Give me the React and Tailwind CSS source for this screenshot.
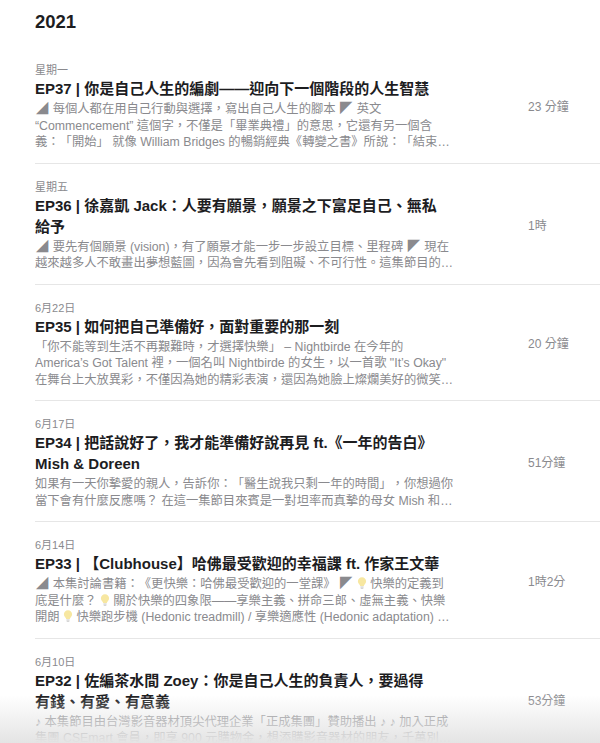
import React from 'react';

const Bulb = () => (
  <svg width="10" height="14" viewBox="0 0 11 14" className="inline-block align-[-2px]">
    <path d="M5.5 0.8C2.9 0.8 1 2.7 1 5.1c0 1.6 0.8 2.6 1.6 3.5 0.5 0.6 0.8 1.1 0.8 1.7h4.2c0-0.6 0.3-1.1 0.8-1.7C9.2 7.7 10 6.7 10 5.1 10 2.7 8.1 0.8 5.5 0.8z" fill="#f7e7a1" />
    <rect x="3.5" y="10.8" width="4" height="1.2" rx="0.5" fill="#c9c9c9" />
    <rect x="3.9" y="12.3" width="3.2" height="1.1" rx="0.5" fill="#c9c9c9" />
  </svg>
);

// 三角括號符號，左右各留一點空間
const Tri = ({ c }) => <span className="mx-[1px]">{c}</span>;

const episodes = [
  {
    date: '星期一',
    title: 'EP37 | 你是自己人生的編劇——迎向下一個階段的人生智慧',
    desc: (
      <>
        <Tri c="◢" /> 每個人都在用自己行動與選擇，寫出自己人生的腳本 <Tri c="◤" /> 英文 “Commencement” 這個字，不僅是「畢業典禮」的意思，它還有另一個含義：「開始」 就像 William Bridges 的暢銷經典《轉變之書》所說：「結束即是開始，每一個轉變都從結束開始」
      </>
    ),
    clamp: 'line-clamp-3',
    duration: '23 分鐘',
  },
  {
    date: '星期五',
    title: 'EP36 | 徐嘉凱 Jack：人要有願景，願景之下富足自己、無私給予',
    desc: (
      <>
        <Tri c="◢" /> 要先有個願景 (vision)，有了願景才能一步一步設立目標、里程碑 <Tri c="◤" /> 現在越來越多人不敢畫出夢想藍圖，因為會先看到阻礙、不可行性。這集節目的來賓徐嘉凱 Jack 要告訴大家
      </>
    ),
    clamp: 'line-clamp-2',
    duration: '1時',
  },
  {
    date: '6月22日',
    title: 'EP35 | 如何把自己準備好，面對重要的那一刻',
    desc: '「你不能等到生活不再艱難時，才選擇快樂」 – Nightbirde 在今年的 America’s Got Talent 裡，一個名叫 Nightbirde 的女生，以一首歌 "It’s Okay" 在舞台上大放異彩，不僅因為她的精彩表演，還因為她臉上燦爛美好的微笑與堅強',
    clamp: 'line-clamp-3',
    duration: '20 分鐘',
  },
  {
    date: '6月17日',
    title: 'EP34 | 把話說好了，我才能準備好說再見 ft.《一年的告白》Mish & Doreen',
    desc: '如果有一天你摯愛的親人，告訴你：「醫生說我只剩一年的時間」，你想過你當下會有什麼反應嗎？ 在這一集節目來賓是一對坦率而真摯的母女 Mish 和 Doreen，她們一起寫下',
    clamp: 'line-clamp-2',
    duration: '51分鐘',
  },
  {
    date: '6月14日',
    title: 'EP33 | 【Clubhouse】哈佛最受歡迎的幸福課 ft. 作家王文華',
    desc: (
      <>
        <Tri c="◢" /> 本集討論書籍：《更快樂：哈佛最受歡迎的一堂課》 <Tri c="◤" /> <Bulb /> 快樂的定義到底是什麼？ <Bulb /> 關於快樂的四象限——享樂主義、拼命三郎、虛無主義、快樂開朗 <Bulb /> 快樂跑步機 (Hedonic treadmill) / 享樂適應性 (Hedonic adaptation) 與如何跳脫
      </>
    ),
    clamp: 'line-clamp-3',
    duration: '1時2分',
  },
  {
    date: '6月10日',
    title: (
      <>
        EP32 | 佐編茶水間 Zoey：你是自己人生的負責人，要過得
        <br />
        有錢、有愛、有意義
      </>
    ),
    desc: '♪ 本集節目由台灣影音器材頂尖代理企業「正成集團」贊助播出 ♪ ♪ 加入正成集團 CSEmart 會員，即享 900 元購物金，想添購影音器材的朋友，千萬別錯過這個好機會',
    clamp: 'line-clamp-2',
    duration: '53分鐘',
  },
];

const EpisodeRow = ({ ep }) => (
  <div className="flex items-center border-b border-[#e6e6e6] pt-[16px] pb-[12px]">
    <div className="w-[420px] shrink-0">
      <p className="text-[11px] leading-[14px] text-[#8a8a8e]">{ep.date}</p>
      <h3 className="mt-[1px] pr-[10px] text-[15px] leading-[21px] font-semibold text-[#1d1d1f]">{ep.title}</h3>
      <p className={`mt-[2px] text-[12.3px] leading-[16.5px] text-[#8a8a8e] ${ep.clamp}`}>{ep.desc}</p>
    </div>
    <span className="ml-[73px] text-[12px] text-[#8a8a8e] whitespace-nowrap">{ep.duration}</span>
  </div>
);

export default function App() {
  return (
    <div
      className="relative h-[743px] w-[600px] overflow-hidden bg-white [text-spacing-trim:space-all]"
      style={{ fontFamily: '"Liberation Sans", "Noto Sans CJK TC", sans-serif' }}
    >
      <h2 className="pl-[35px] pt-[10px] text-[18.5px] leading-[24px] font-bold text-[#1d1d1f]">2021</h2>
      <div className="ml-[35px] mt-[13px]">
        {episodes.map((ep, i) => (
          <EpisodeRow key={i} ep={ep} />
        ))}
      </div>
      <div className="pointer-events-none absolute inset-x-0 bottom-0 h-[48px] bg-gradient-to-b from-white/0 to-[#e4e4e4]" />
    </div>
  );
}
